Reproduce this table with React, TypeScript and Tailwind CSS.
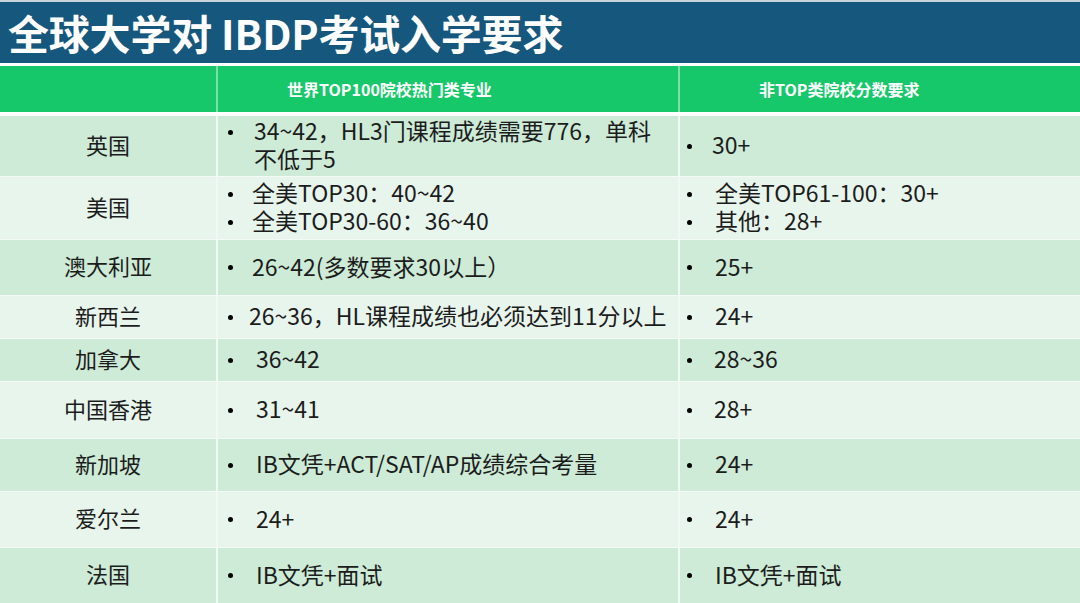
import React from 'react';

type Row = {
  name: string;
  top: string[];
  other: string[];
  h: string;
  bg: string;
  topGap?: string;
  otherGap?: string;
};

const dark = 'bg-[#cdebd6]';
const light = 'bg-[#e8f5ec]';

const rows: Row[] = [
  { name: '英国', top: ['34~42，HL3门课程成绩需要776，单科\n不低于5'], other: ['30+'], h: 'h-[60px]', bg: dark, topGap: 'pl-[21px]', otherGap: 'pl-[20px]' },
  { name: '美国', top: ['全美TOP30：40~42', '全美TOP30-60：36~40'], other: ['全美TOP61-100：30+', '其他：28+'], h: 'h-[62px]', bg: light, topGap: 'pl-[19px]' },
  { name: '澳大利亚', top: ['26~42(多数要求30以上）'], other: ['25+'], h: 'h-[55px]', bg: dark, topGap: 'pl-[19px]' },
  { name: '新西兰', top: ['26~36，HL课程成绩也必须达到11分以上'], other: ['24+'], h: 'h-[42px]', bg: light, topGap: 'pl-[16px]' },
  { name: '加拿大', top: ['36~42'], other: ['28~36'], h: 'h-[42px]', bg: dark, otherGap: 'pl-[22px]' },
  { name: '中国香港', top: ['31~41'], other: ['28+'], h: 'h-[56px]', bg: light, otherGap: 'pl-[22px]' },
  { name: '新加坡', top: ['IB文凭+ACT/SAT/AP成绩综合考量'], other: ['24+'], h: 'h-[52px]', bg: dark },
  { name: '爱尔兰', top: ['24+'], other: ['24+'], h: 'h-[55px]', bg: light },
  { name: '法国', top: ['IB文凭+面试'], other: ['IB文凭+面试'], h: 'h-[55px]', bg: dark },
];

const font = { fontFamily: '"Noto Sans CJK SC", "Noto Sans", sans-serif' };

const Bullets: React.FC<{ items: string[]; gap?: string }> = ({ items, gap }) => (
  <ul className="flex flex-col">
    {items.map((t) => (
      <li key={t} className="flex items-start">
        <span className="h-[28px] pt-[4px] flex items-center shrink-0">
          <span className="block w-[5px] h-[5px] rounded-full bg-black" />
        </span>
        <span className={`${gap ?? 'pl-[23px]'} text-[23px] leading-[28px] text-[#1c1c1c] whitespace-nowrap`}>
          {t.split('\n').map((line, i) => (
            <span key={i} className="block">{line}</span>
          ))}
        </span>
      </li>
    ))}
  </ul>
);

export default function App() {
  return (
    <div className="w-[1080px] h-[603px] overflow-hidden bg-white" style={font}>
      <div className="h-[2px] bg-[#c9d3dc]" />
      <div className="h-[61px] bg-[#16577e] flex items-center pl-[8px]">
        <h1 className="text-[41px] font-bold text-white tracking-[-0.2px] leading-none">全球大学对 IBDP考试入学要求</h1>
      </div>
      <div className="h-[3px]" />
      <div className="h-[46px] bg-[#17c86a] flex text-white font-bold text-[16px]">
        <div className="w-[216px]" />
        <div className="w-[462px] border-l-2 border-[#7ddfa6] flex items-center pl-[69px]">世界TOP100院校热门类专业</div>
        <div className="flex-1 border-l-2 border-[#7ddfa6] flex items-center pl-[79px]">非TOP类院校分数要求</div>
      </div>
      <div className="h-[4px]" />
      <div className="flex flex-col gap-px bg-[#f4faf6]">
        {rows.map((r) => (
          <div key={r.name} className={`${r.h} ${r.bg} flex`}>
            <div className="w-[216px] flex items-center justify-center pb-[4px] text-[22px] text-[#1c1c1c]">{r.name}</div>
            <div className="w-[462px] border-l-2 border-[#f2f9f4] flex items-center pl-[10px] pb-[4px]">
              <Bullets items={r.top} gap={r.topGap} />
            </div>
            <div className="flex-1 border-l-2 border-[#f2f9f4] flex items-center pl-[7px] pb-[4px]">
              <Bullets items={r.other} gap={r.otherGap} />
            </div>
          </div>
        ))}
      </div>
    </div>
  );
}
